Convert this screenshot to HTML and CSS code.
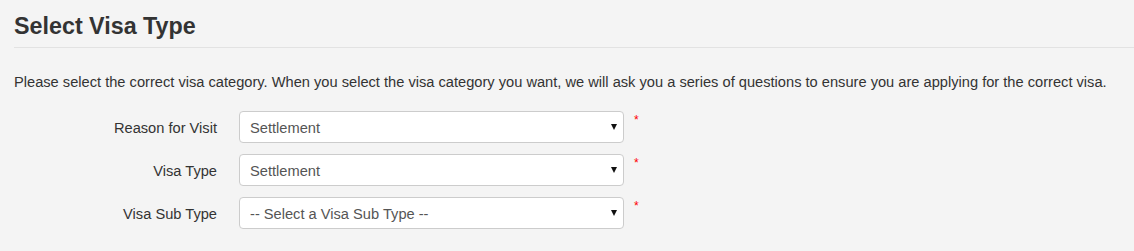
FILE: index.html
```html
<!DOCTYPE html>
<html lang="en">
<head>
<meta charset="utf-8">
<title>Select Visa Type</title>
<link rel="stylesheet" href="styles.css">
</head>
<body>
<div class="page">
  <h2 class="page-title">Select Visa Type</h2>
  <p class="intro">Please select the correct visa category. When you select the visa category you want, we will ask you a series of questions to ensure you are applying for the correct visa.</p>
  <form class="visa-form">
    <div class="form-row">
      <label class="form-label" for="reason">Reason for Visit</label>
      <div class="select-wrap">
        <select id="reason" class="form-select">
          <option>Settlement</option>
        </select>
        <span class="select-arrow"></span>
      </div>
      <span class="required">*</span>
    </div>
    <div class="form-row">
      <label class="form-label" for="type">Visa Type</label>
      <div class="select-wrap">
        <select id="type" class="form-select">
          <option>Settlement</option>
        </select>
        <span class="select-arrow"></span>
      </div>
      <span class="required">*</span>
    </div>
    <div class="form-row">
      <label class="form-label" for="subtype">Visa Sub Type</label>
      <div class="select-wrap">
        <select id="subtype" class="form-select">
          <option>-- Select a Visa Sub Type --</option>
        </select>
        <span class="select-arrow"></span>
      </div>
      <span class="required">*</span>
    </div>
  </form>
</div>
</body>
</html>
```

FILE: styles.css
```css
html, body {
  margin: 0;
  padding: 0;
  background: #f4f4f4;
}

body {
  font-family: "Liberation Sans", Arial, sans-serif;
  font-size: 14.65px;
  color: #333;
}

.page {
  padding: 13px 0 0 14px;
}

.page-title {
  margin: 0;
  font-size: 23.3px;
  line-height: 26px;
  font-weight: bold;
  color: #333;
  padding-bottom: 8px;
  border-bottom: 1px solid #e2e2e2;
}

.intro {
  margin: 24px 0 0 0;
  line-height: 20px;
}

.visa-form {
  margin-top: 19px;
  display: flex;
  flex-direction: column;
  gap: 11px;
}

.form-row {
  display: grid;
  grid-template-columns: 203px 385px auto;
  column-gap: 22px;
  align-items: center;
}

.form-label {
  text-align: right;
  line-height: 20px;
  padding-top: 2px;
}

.select-wrap {
  position: relative;
  height: 32px;
}

.form-select {
  appearance: none;
  -webkit-appearance: none;
  display: block;
  width: 100%;
  height: 32px;
  box-sizing: border-box;
  margin: 0;
  padding: 2px 30px 0 10px;
  background: #fff;
  border: 1px solid #ccc;
  border-radius: 4px;
  font-family: "Liberation Sans", Arial, sans-serif;
  font-size: 14.65px;
  color: #555;
}

.select-arrow {
  position: absolute;
  right: 7px;
  top: 13px;
  width: 0;
  height: 0;
  border-left: 3.5px solid transparent;
  border-right: 3.5px solid transparent;
  border-top: 6px solid #111;
  pointer-events: none;
}

.required {
  align-self: start;
  margin-left: -12px;
  margin-top: 3px;
  color: #f00;
  font-size: 12px;
  line-height: 12px;
}
```
